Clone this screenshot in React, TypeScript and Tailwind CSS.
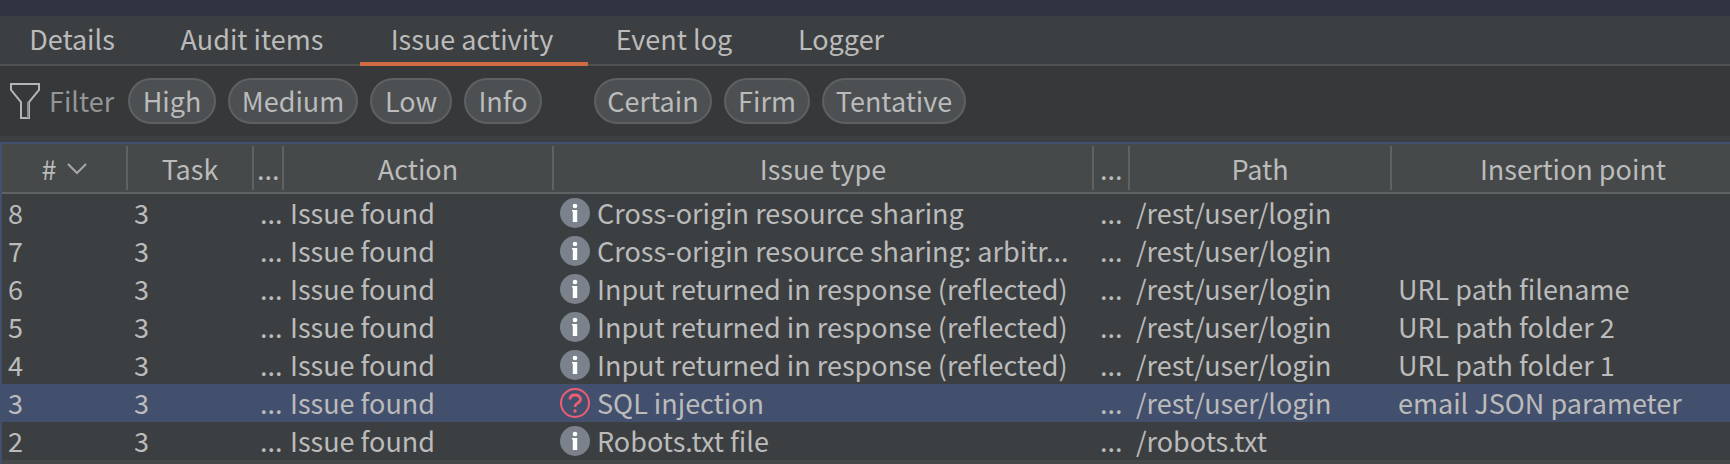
type Tab = { label: string; width: string; active?: boolean };
type Issue = {
  id: number;
  task: number;
  action: string;
  severity: "info" | "high";
  type: string;
  path: string;
  insertionPoint: string;
};

const tabs: Tab[] = [
  { label: "Details", width: "w-[148px]" },
  { label: "Audit items", width: "w-[212px]" },
  { label: "Issue activity", width: "w-[228px]", active: true },
  { label: "Event log", width: "w-[176px]" },
  { label: "Logger", width: "w-[158px]" },
];

const severityChips = [
  { label: "High", width: "w-[88px]" },
  { label: "Medium", width: "w-[130px]" },
  { label: "Low", width: "w-[82px]" },
  { label: "Info", width: "w-[78px]" },
];

const confidenceChips = [
  { label: "Certain", width: "w-[118px]" },
  { label: "Firm", width: "w-[86px]" },
  { label: "Tentative", width: "w-[144px]" },
];

const login = "/rest/user/login";
const reflected = "Input returned in response (reflected)";

const issues: Issue[] = [
  { id: 8, task: 3, action: "Issue found", severity: "info", type: "Cross-origin resource sharing", path: login, insertionPoint: "" },
  { id: 7, task: 3, action: "Issue found", severity: "info", type: "Cross-origin resource sharing: arbitr...", path: login, insertionPoint: "" },
  { id: 6, task: 3, action: "Issue found", severity: "info", type: reflected, path: login, insertionPoint: "URL path filename" },
  { id: 5, task: 3, action: "Issue found", severity: "info", type: reflected, path: login, insertionPoint: "URL path folder 2" },
  { id: 4, task: 3, action: "Issue found", severity: "info", type: reflected, path: login, insertionPoint: "URL path folder 1" },
  { id: 3, task: 3, action: "Issue found", severity: "high", type: "SQL injection", path: login, insertionPoint: "email JSON parameter" },
  { id: 2, task: 3, action: "Issue found", severity: "info", type: "Robots.txt file", path: "/robots.txt", insertionPoint: "" },
];

const columns = [
  { label: "Task", align: "justify-center" },
  { label: "...", align: "pl-[3px]" },
  { label: "Action", align: "justify-center" },
  { label: "Issue type", align: "justify-center" },
  { label: "...", align: "pl-[6px]" },
  { label: "Path", align: "justify-center" },
];

function FunnelIcon() {
  return (
    <svg className="shrink-0" width="32" height="38" viewBox="0 0 32 38" fill="none" stroke="#b4b5b6" strokeWidth="2" aria-hidden="true">
      <path d="M2 2H30V8L20 20V36H12V20L2 8Z" />
      <path d="M19 20V36" stroke="#8b8c8d" />
    </svg>
  );
}

function SortIcon() {
  return (
    <svg width="20" height="12" viewBox="0 0 20 12" fill="none" stroke="#a6a8a8" strokeWidth="2" aria-hidden="true">
      <path d="M1 1L10 10L19 1" />
    </svg>
  );
}

function SeverityIcon({ severity }: { severity: Issue["severity"] }) {
  if (severity === "high") {
    return (
      <svg className="shrink-0" width="30" height="30" viewBox="0 0 30 30" fill="none" aria-hidden="true">
        <circle cx="15" cy="15" r="14" stroke="#ee5d75" strokeWidth="2" />
        <path d="M10 11.5C10 8.5 12 7 15 7S20.5 8.7 20.5 11.3C20.5 13.6 19 14.4 17.2 15.4C15.6 16.3 15 17 15 19" stroke="#ee5d75" strokeWidth="2.8" />
        <circle cx="15" cy="23" r="1.7" fill="#ee5d75" />
      </svg>
    );
  }
  return (
    <svg className="shrink-0" width="30" height="30" viewBox="0 0 30 30" aria-hidden="true">
      <circle cx="15" cy="15" r="15" fill="#7b828b" />
      <circle cx="15" cy="8" r="2.3" fill="#fff" />
      <path d="M12 12H17.2V24H12.8V13.5H12Z" fill="#fff" />
    </svg>
  );
}

function Chip({ label, width }: { label: string; width: string }) {
  return (
    <button
      type="button"
      className={`flex h-[46px] items-center justify-center rounded-full border-2 border-[#5e6162] bg-[#4c5052] whitespace-nowrap ${width}`}
    >
      {label}
    </button>
  );
}

export default function App() {
  return (
    <main className="overflow-hidden bg-[#464949] font-['Noto_Sans_CJK_SC','Open_Sans',sans-serif] text-[27px] leading-[38px] text-[#bbbbbb]">
      <div className="h-4 bg-[#303440]" />

      <nav className="flex h-[50px] bg-[#3c3f41] shadow-[inset_0_-2px_0_#4e5051]">
        {tabs.map((tab) => (
          <button
            key={tab.label}
            type="button"
            className={`flex items-center justify-center pr-1 pb-1 whitespace-nowrap ${tab.width} ${
              tab.active ? "shadow-[inset_0_-4px_0_#ce6b40]" : ""
            }`}
          >
            {tab.label}
          </button>
        ))}
      </nav>

      <div className="flex h-[70px] items-center gap-3 bg-[#373839] pl-[9px]">
        <div className="flex w-[107px] items-center gap-2">
          <FunnelIcon />
          <span className="text-[#949595]">Filter</span>
        </div>
        <div className="flex gap-3">
          {severityChips.map((chip) => (
            <Chip key={chip.label} {...chip} />
          ))}
        </div>
        <div className="ml-10 flex gap-3">
          {confidenceChips.map((chip) => (
            <Chip key={chip.label} {...chip} />
          ))}
        </div>
      </div>

      <div className="bg-[#3c3f41] pt-[6px]">
        <div className="border-t-2 border-l-2 border-[#43506d]">
          <table className="w-full table-fixed border-separate border-spacing-0 text-left">
            <colgroup>
              <col className="w-[126px]" />
              <col className="w-[126px]" />
              <col className="w-[30px]" />
              <col className="w-[270px]" />
              <col className="w-[540px]" />
              <col className="w-[36px]" />
              <col className="w-[262px]" />
              <col />
            </colgroup>
            <thead className="bg-[#464949]">
              <tr>
                <th className="border-b-2 border-[#5f6263] p-0 py-[2px] font-normal">
                  <button
                    type="button"
                    className="flex h-[44px] w-full items-center justify-center gap-[10px] border-r-2 border-[#5f6263] pt-[2px]"
                  >
                    #
                    <SortIcon />
                  </button>
                </th>
                {columns.map((column, index) => (
                  <th key={index} className="border-b-2 border-[#5f6263] p-0 py-[2px] font-normal">
                    <div className={`flex h-[44px] items-center border-r-2 border-[#5f6263] pt-[2px] whitespace-nowrap ${column.align}`}>
                      {column.label}
                    </div>
                  </th>
                ))}
                <th className="border-b-2 border-[#5f6263] p-0 py-[2px] font-normal">
                  <div className="flex h-[44px] items-center justify-center pt-[2px] pl-6 whitespace-nowrap">Insertion point</div>
                </th>
              </tr>
            </thead>
            <tbody>
              {issues.map((issue) => (
                <tr key={issue.id} className={`h-[38px] whitespace-nowrap *:p-0 *:pl-[6px] ${issue.id === 3 ? "bg-[#43506d]" : ""}`}>
                  <td>{issue.id}</td>
                  <td>{issue.task}</td>
                  <td>...</td>
                  <td>{issue.action}</td>
                  <td>
                    <div className="flex items-center gap-[7px]">
                      <SeverityIcon severity={issue.severity} />
                      <span>{issue.type}</span>
                    </div>
                  </td>
                  <td>...</td>
                  <td>{issue.path}</td>
                  <td>{issue.insertionPoint}</td>
                </tr>
              ))}
            </tbody>
          </table>
        </div>
      </div>
      <div className="h-1 border-l-2 border-[#43506d]" />
    </main>
  );
}
